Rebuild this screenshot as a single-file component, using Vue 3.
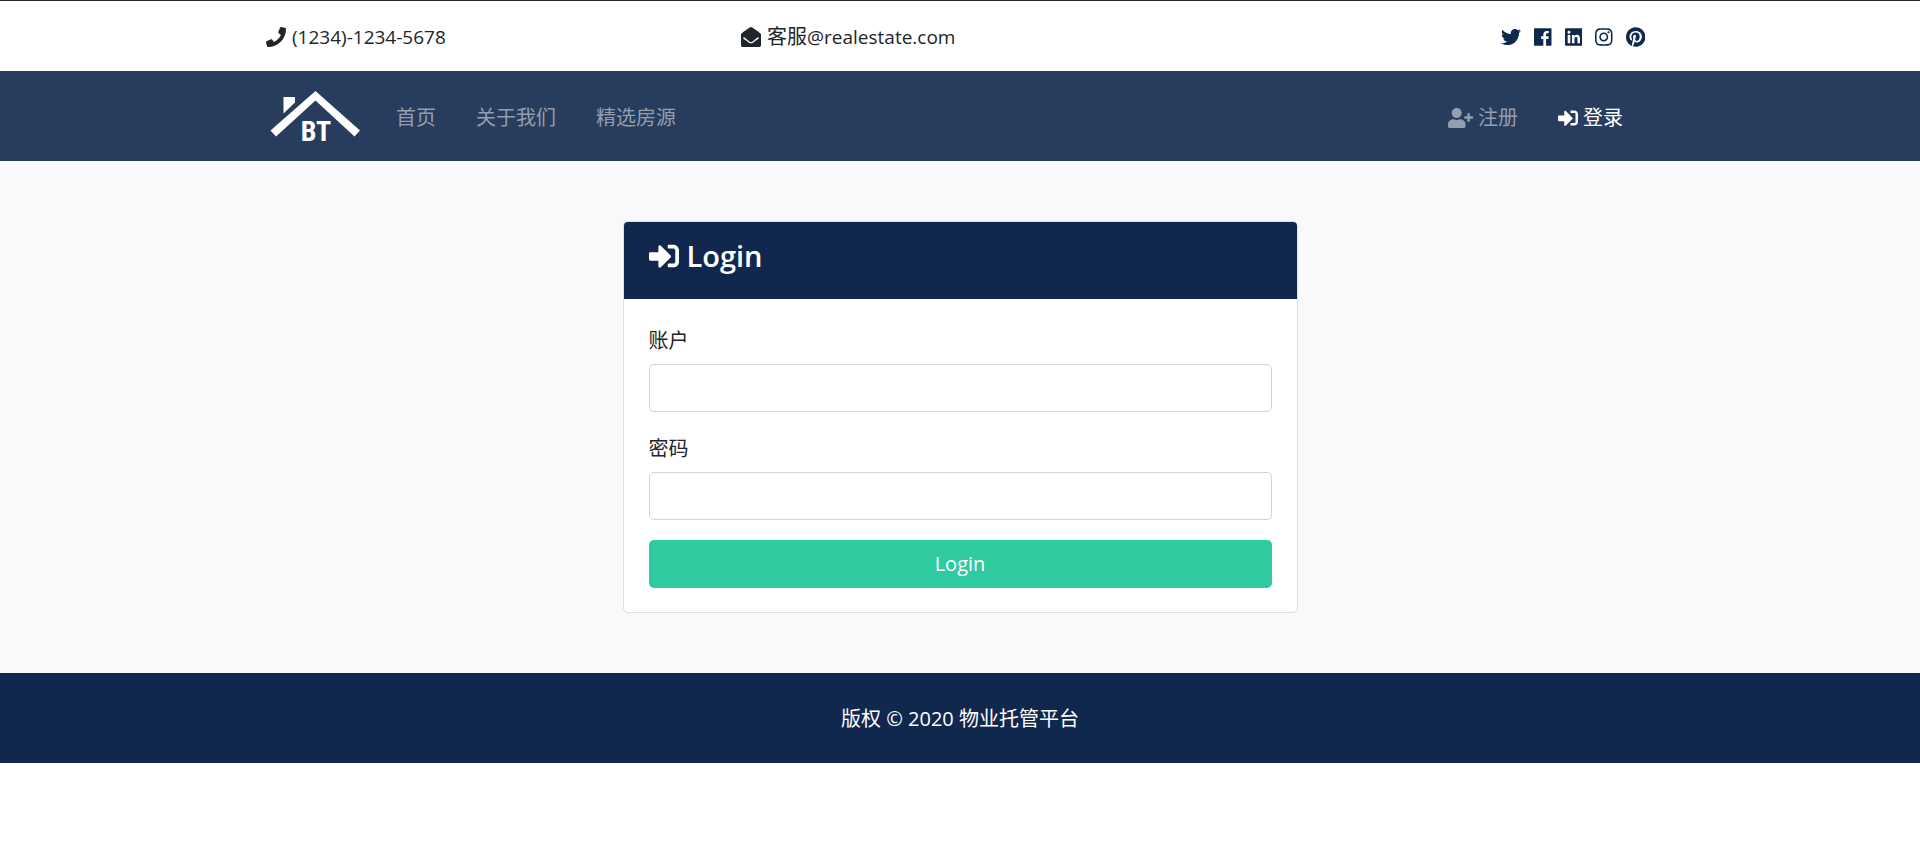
<script setup>
import { ref } from 'vue'

const username = ref('')
const password = ref('')

const icons = {
  phone: { w: 512, d: 'M493.4 24.6l-104-24c-11.3-2.6-22.9 3.3-27.5 13.9l-48 112c-4.2 9.8-1.4 21.3 6.9 28l60.6 49.6c-36 76.7-98.9 140.5-177.2 177.2l-49.6-60.6c-6.8-8.3-18.2-11.1-28-6.9l-112 48C3.9 366.5-2 378.1.6 389.4l24 104C27.1 504.2 36.7 512 48 512c256.1 0 464-207.5 464-464 0-11.2-7.7-20.9-18.6-23.4z' },
  envelope: { w: 512, d: 'M512 464c0 26.51-21.49 48-48 48H48c-26.51 0-48-21.49-48-48V200.724a48 48 0 0 1 18.387-37.776c24.913-19.529 45.501-35.365 164.2-121.511C199.412 29.17 232.797-.347 256 .003c23.198-.354 56.596 29.172 73.413 41.433 118.687 86.137 139.303 101.995 164.2 121.512A48 48 0 0 1 512 200.724V464zm-65.666-196.605c-2.563-3.728-7.7-4.595-11.339-1.907-22.845 16.873-55.462 40.705-105.582 77.079-16.825 12.266-50.21 41.781-73.413 41.43-23.211.344-56.559-29.143-73.413-41.43-50.114-36.37-82.734-60.204-105.582-77.079-3.639-2.688-8.776-1.821-11.339 1.907l-9.072 13.196a7.998 7.998 0 0 0 1.839 10.967c22.887 16.899 55.454 40.69 105.303 76.868 20.274 14.781 56.524 47.813 92.264 47.573 35.724.242 71.961-32.771 92.263-47.573 49.85-36.179 82.418-59.97 105.303-76.868a7.998 7.998 0 0 0 1.839-10.967l-9.071-13.196z' },
  userPlus: { w: 640, d: 'M624 208h-64v-64c0-8.8-7.2-16-16-16h-32c-8.8 0-16 7.2-16 16v64h-64c-8.8 0-16 7.2-16 16v32c0 8.8 7.2 16 16 16h64v64c0 8.8 7.2 16 16 16h32c8.8 0 16-7.2 16-16v-64h64c8.8 0 16-7.2 16-16v-32c0-8.8-7.2-16-16-16zm-400 48c70.7 0 128-57.3 128-128S294.7 0 224 0 96 57.3 96 128s57.3 128 128 128zm89.6 32h-16.7c-22.2 10.2-46.9 16-72.9 16s-50.6-5.8-72.9-16h-16.7C60.2 288 0 348.2 0 422.4V464c0 26.5 21.5 48 48 48h352c26.5 0 48-21.5 48-48v-41.6c0-74.2-60.2-134.4-134.4-134.4z' },
  signIn: { w: 512, d: 'M416 448h-84c-6.6 0-12-5.4-12-12v-40c0-6.6 5.4-12 12-12h84c17.7 0 32-14.3 32-32V160c0-17.7-14.3-32-32-32h-84c-6.6 0-12-5.4-12-12V76c0-6.6 5.4-12 12-12h84c53 0 96 43 96 96v192c0 53-43 96-96 96zm-47-201L201 79c-15-15-41-4.5-41 17v96H24c-13.3 0-24 10.7-24 24v96c0 13.3 10.7 24 24 24h136v96c0 21.5 26 32 41 17l168-168c9.3-9.4 9.3-24.6 0-34z' }
}

const socials = [
  { name: 'Twitter', w: 512, d: 'M459.37 151.716c.325 4.548.325 9.097.325 13.645 0 138.72-105.583 298.558-298.558 298.558-59.452 0-114.68-17.219-161.137-47.106 8.447.974 16.568 1.299 25.34 1.299 49.055 0 94.213-16.568 130.274-44.832-46.132-.975-84.792-31.188-98.112-72.772 6.498.974 12.995 1.624 19.818 1.624 9.421 0 18.843-1.3 27.614-3.573-48.081-9.747-84.143-51.98-84.143-102.985v-1.299c13.969 7.797 30.214 12.67 47.431 13.319-28.264-18.843-46.781-51.005-46.781-87.391 0-19.492 5.197-37.36 14.294-52.954 51.655 63.675 129.3 105.258 216.365 109.807-1.624-7.797-2.599-15.918-2.599-24.04 0-57.828 46.782-104.934 104.934-104.934 30.213 0 57.502 12.67 76.67 33.137 23.715-4.548 46.456-13.32 66.599-25.34-7.798 24.366-24.366 44.833-46.132 57.827 21.117-2.273 41.584-8.122 60.426-16.243-14.292 20.791-32.161 39.308-52.628 54.253z' },
  { name: 'Facebook', w: 448, d: 'M448 56.7v398.5c0 13.7-11.1 24.7-24.7 24.7H309.1V306.5h58.2l8.7-67.6h-67v-43.2c0-19.6 5.4-32.9 33.5-32.9h35.8v-60.5c-6.2-.8-27.4-2.7-52.2-2.7-51.6 0-87 31.5-87 89.4v49.9h-58.4v67.6h58.4V480H24.7C11.1 480 0 468.9 0 455.3V56.7C0 43.1 11.1 32 24.7 32h398.5c13.7 0 24.8 11.1 24.8 24.7z' },
  { name: 'LinkedIn', w: 448, d: 'M416 32H31.9C14.3 32 0 46.5 0 64.3v383.4C0 465.5 14.3 480 31.9 480H416c17.6 0 32-14.5 32-32.3V64.3c0-17.8-14.4-32.3-32-32.3zM135.4 416H69V202.2h66.5V416zm-33.2-243c-21.3 0-38.5-17.3-38.5-38.5S80.9 96 102.2 96c21.2 0 38.5 17.3 38.5 38.5 0 21.3-17.2 38.5-38.5 38.5zm282.1 243h-66.4V312c0-24.8-.5-56.7-34.5-56.7-34.6 0-39.9 27-39.9 54.9V416h-66.4V202.2h63.7v29.2h.9c8.9-16.8 30.6-34.5 62.9-34.5 67.2 0 79.7 44.3 79.7 101.9V416z' },
  { name: 'Instagram', w: 448, d: 'M224.1 141c-63.6 0-114.9 51.3-114.9 114.9s51.3 114.9 114.9 114.9S339 319.5 339 255.9 287.7 141 224.1 141zm0 189.6c-41.1 0-74.7-33.5-74.7-74.7s33.5-74.7 74.7-74.7 74.7 33.5 74.7 74.7-33.6 74.7-74.7 74.7zm146.4-194.3c0 14.9-12 26.8-26.8 26.8-14.9 0-26.8-12-26.8-26.8s12-26.8 26.8-26.8 26.8 12 26.8 26.8zm76.1 27.2c-1.7-35.9-9.9-67.7-36.2-93.9-26.2-26.2-58-34.4-93.9-36.2-37-2.1-147.9-2.1-184.9 0-35.8 1.7-67.6 9.9-93.9 36.1s-34.4 58-36.2 93.9c-2.1 37-2.1 147.9 0 184.9 1.7 35.9 9.9 67.7 36.2 93.9s58 34.4 93.9 36.2c37 2.1 147.9 2.1 184.9 0 35.9-1.7 67.7-9.9 93.9-36.2 26.2-26.2 34.4-58 36.2-93.9 2.1-37 2.1-147.8 0-184.8zM398.8 388c-7.8 19.6-22.9 34.7-42.6 42.6-29.5 11.7-99.5 9-132.1 9s-102.7 2.6-132.1-9c-19.6-7.8-34.7-22.9-42.6-42.6-11.7-29.5-9-99.5-9-132.1s-2.6-102.7 9-132.1c7.8-19.6 22.9-34.7 42.6-42.6 29.5-11.7 99.5-9 132.1-9s102.7-2.6 132.1 9c19.6 7.8 34.7 22.9 42.6 42.6 11.7 29.5 9 99.5 9 132.1s2.7 102.7-9 132.1z' },
  { name: 'Pinterest', w: 496, d: 'M496 256c0 137-111 248-248 248-25.6 0-50.2-3.9-73.4-11.1 10.1-16.5 25.2-43.5 30.8-65 3-11.6 15.4-59 15.4-59 8.1 15.4 31.7 28.5 56.8 28.5 74.8 0 128.7-68.8 128.7-154.3 0-81.9-66.9-143.2-152.9-143.2-107 0-163.9 71.8-163.9 150.1 0 36.4 19.4 81.7 50.3 96.1 4.7 2.2 7.2 1.2 8.3-3.3.8-3.4 5-20.3 6.9-28.1.6-2.5.3-4.7-1.7-7.1-10.1-12.5-18.3-35.3-18.3-56.6 0-54.7 41.4-107.6 112-107.6 60.9 0 103.6 41.5 103.6 100.9 0 67.1-33.9 113.6-78 113.6-24.3 0-42.6-20.1-36.7-44.8 7-29.5 20.5-61.3 20.5-82.6 0-19-10.2-34.9-31.4-34.9-24.9 0-44.9 25.7-44.9 60.2 0 22 7.4 36.8 7.4 36.8s-24.5 103.8-29 123.2c-5 21.4-3 51.6-.9 71.2C65.4 450.9 0 361.1 0 256 0 119 111 8 248 8s248 111 248 248z' }
]

const links = ['首页', '关于我们', '精选房源']
</script>

<template>
  <div class="page">
    <header class="topbar">
      <div class="container topbar-grid">
        <div class="contact">
          <svg class="icon" :viewBox="`0 0 ${icons.phone.w} 512`" aria-hidden="true"><path :d="icons.phone.d" /></svg>
          <span class="latin">(1234)-1234-5678</span>
        </div>
        <div class="contact">
          <svg class="icon" :viewBox="`0 0 ${icons.envelope.w} 512`" aria-hidden="true"><path :d="icons.envelope.d" /></svg>
          <span>客服<span class="latin">@realestate.com</span></span>
        </div>
        <div class="socials">
          <a v-for="s in socials" :key="s.name" href="#" :aria-label="s.name">
            <svg class="icon" :viewBox="`0 0 ${s.w} 512`" aria-hidden="true"><path :d="s.d" /></svg>
          </a>
        </div>
      </div>
    </header>

    <nav class="navbar">
      <div class="container navbar-row">
        <a class="brand" href="#" aria-label="BT">
          <svg class="logo" viewBox="0 -7 98 66" aria-hidden="true">
            <path d="M49.500 1 L94 40.500 L88.500 46.500 L49.500 10.500 L10 46.500 L4.500 40.500 Z" />
            <path d="M17.500 7 H29 V12.500 L17.500 23.500 Z" />
            <text x="50" y="51" text-anchor="middle">BT</text>
          </svg>
        </a>
        <ul class="nav">
          <li v-for="l in links" :key="l"><a href="#">{{ l }}</a></li>
        </ul>
        <ul class="nav nav-end">
          <li>
            <a href="#">
              <svg class="icon" :viewBox="`0 0 ${icons.userPlus.w} 512`" aria-hidden="true"><path :d="icons.userPlus.d" /></svg>
              <span>注册</span>
            </a>
          </li>
          <li>
            <a href="#" class="active" aria-current="page">
              <svg class="icon" :viewBox="`0 0 ${icons.signIn.w} 512`" aria-hidden="true"><path :d="icons.signIn.d" /></svg>
              <span>登录</span>
            </a>
          </li>
        </ul>
      </div>
    </nav>

    <main class="content">
      <section class="card">
        <div class="card-header">
          <h1>
            <svg class="icon" :viewBox="`0 0 ${icons.signIn.w} 512`" aria-hidden="true"><path :d="icons.signIn.d" /></svg>
            <span>Login</span>
          </h1>
        </div>
        <form class="card-body" @submit.prevent>
          <div class="field">
            <label for="username">账户</label>
            <input id="username" v-model="username" type="text" name="username" />
          </div>
          <div class="field">
            <label for="password">密码</label>
            <input id="password" v-model="password" type="password" name="password" />
          </div>
          <button type="submit">Login</button>
        </form>
      </section>
    </main>

    <footer class="footer">版权 © 2020 物业托管平台</footer>
  </div>
</template>

<style>
body {
  margin: 0;
  background: #fff;
}
</style>

<style scoped>
.page,
.page * {
  box-sizing: border-box;
}
.page {
  border-top: 1px solid #212529;
  color: #212529;
  font-family: "Open Sans", "Noto Sans CJK SC", sans-serif;
  font-size: 20px;
  line-height: 30px;
}
.latin {
  font-size: 19px;
}
a {
  color: inherit;
  text-decoration: none;
}
.icon {
  display: block;
  height: 1em;
  width: auto;
  fill: currentColor;
}
.container {
  width: 100%;
  max-width: 1424px;
  margin: 0 auto;
  padding: 0 18px;
}
.topbar {
  padding: 21px 0 19px;
}
.topbar-grid {
  display: grid;
  grid-template-columns: repeat(3, 1fr);
  gap: 37px;
}
.contact {
  display: flex;
  align-items: center;
  gap: 6px;
}
.socials {
  display: flex;
  align-items: center;
  justify-content: flex-end;
  gap: 13px;
  padding-right: 9px;
  color: #10284e;
}
.navbar {
  padding: 12px 0;
  background: #283d5e;
}
.navbar-row {
  display: flex;
  align-items: center;
}
.brand {
  margin-right: 32px;
}
.logo {
  display: block;
  width: 98px;
  height: 66px;
  fill: #fff;
}
.logo text {
  font-family: "Liberation Sans Narrow", "Roboto Condensed", "Open Sans Condensed", "DejaVu Sans Condensed", sans-serif;
  font-size: 28px;
  font-weight: 700;
}
.nav {
  display: flex;
  gap: 40px;
  margin: 0;
  padding: 3px 0 0;
  list-style: none;
  color: #939eae;
}
.nav a {
  display: flex;
  align-items: center;
  gap: 5px;
}
.nav a.active {
  color: #fff;
}
.nav-end {
  margin-left: auto;
  padding-right: 31px;
}
.content {
  padding: 60px 18px;
  background: #f8f9fb;
}
.card {
  max-width: 675px;
  margin: 0 auto;
  overflow: hidden;
  border: 1px solid #dfdfe1;
  border-radius: 5px;
  background: #fff;
}
.card-header {
  padding: 16px 25px 25px;
  background: #10284e;
  color: #fff;
}
.card-header h1 {
  display: flex;
  align-items: center;
  gap: 8px;
  margin: 0;
  font-size: 29px;
  font-weight: 600;
  line-height: 36px;
}
.card-header .icon {
  height: 30px;
}
.card-body {
  padding: 27px 25px 24px;
}
.field {
  margin-bottom: 20px;
}
label {
  display: block;
  margin-bottom: 8px;
}
.field + .field label {
  padding-top: 2px;
}
input {
  display: block;
  width: 100%;
  height: 48px;
  padding: 8px 15px;
  border: 1px solid #ced4da;
  border-radius: 5px;
  background: #fff;
  color: #495057;
  font: inherit;
}
button {
  display: block;
  width: 100%;
  height: 48px;
  padding: 0 15px;
  border: 0;
  border-radius: 5px;
  background: #30caa0;
  color: #fff;
  font: inherit;
  cursor: pointer;
}
.footer {
  padding: 31px 18px 29px;
  background: #10284e;
  color: #fff;
  text-align: center;
}
</style>
